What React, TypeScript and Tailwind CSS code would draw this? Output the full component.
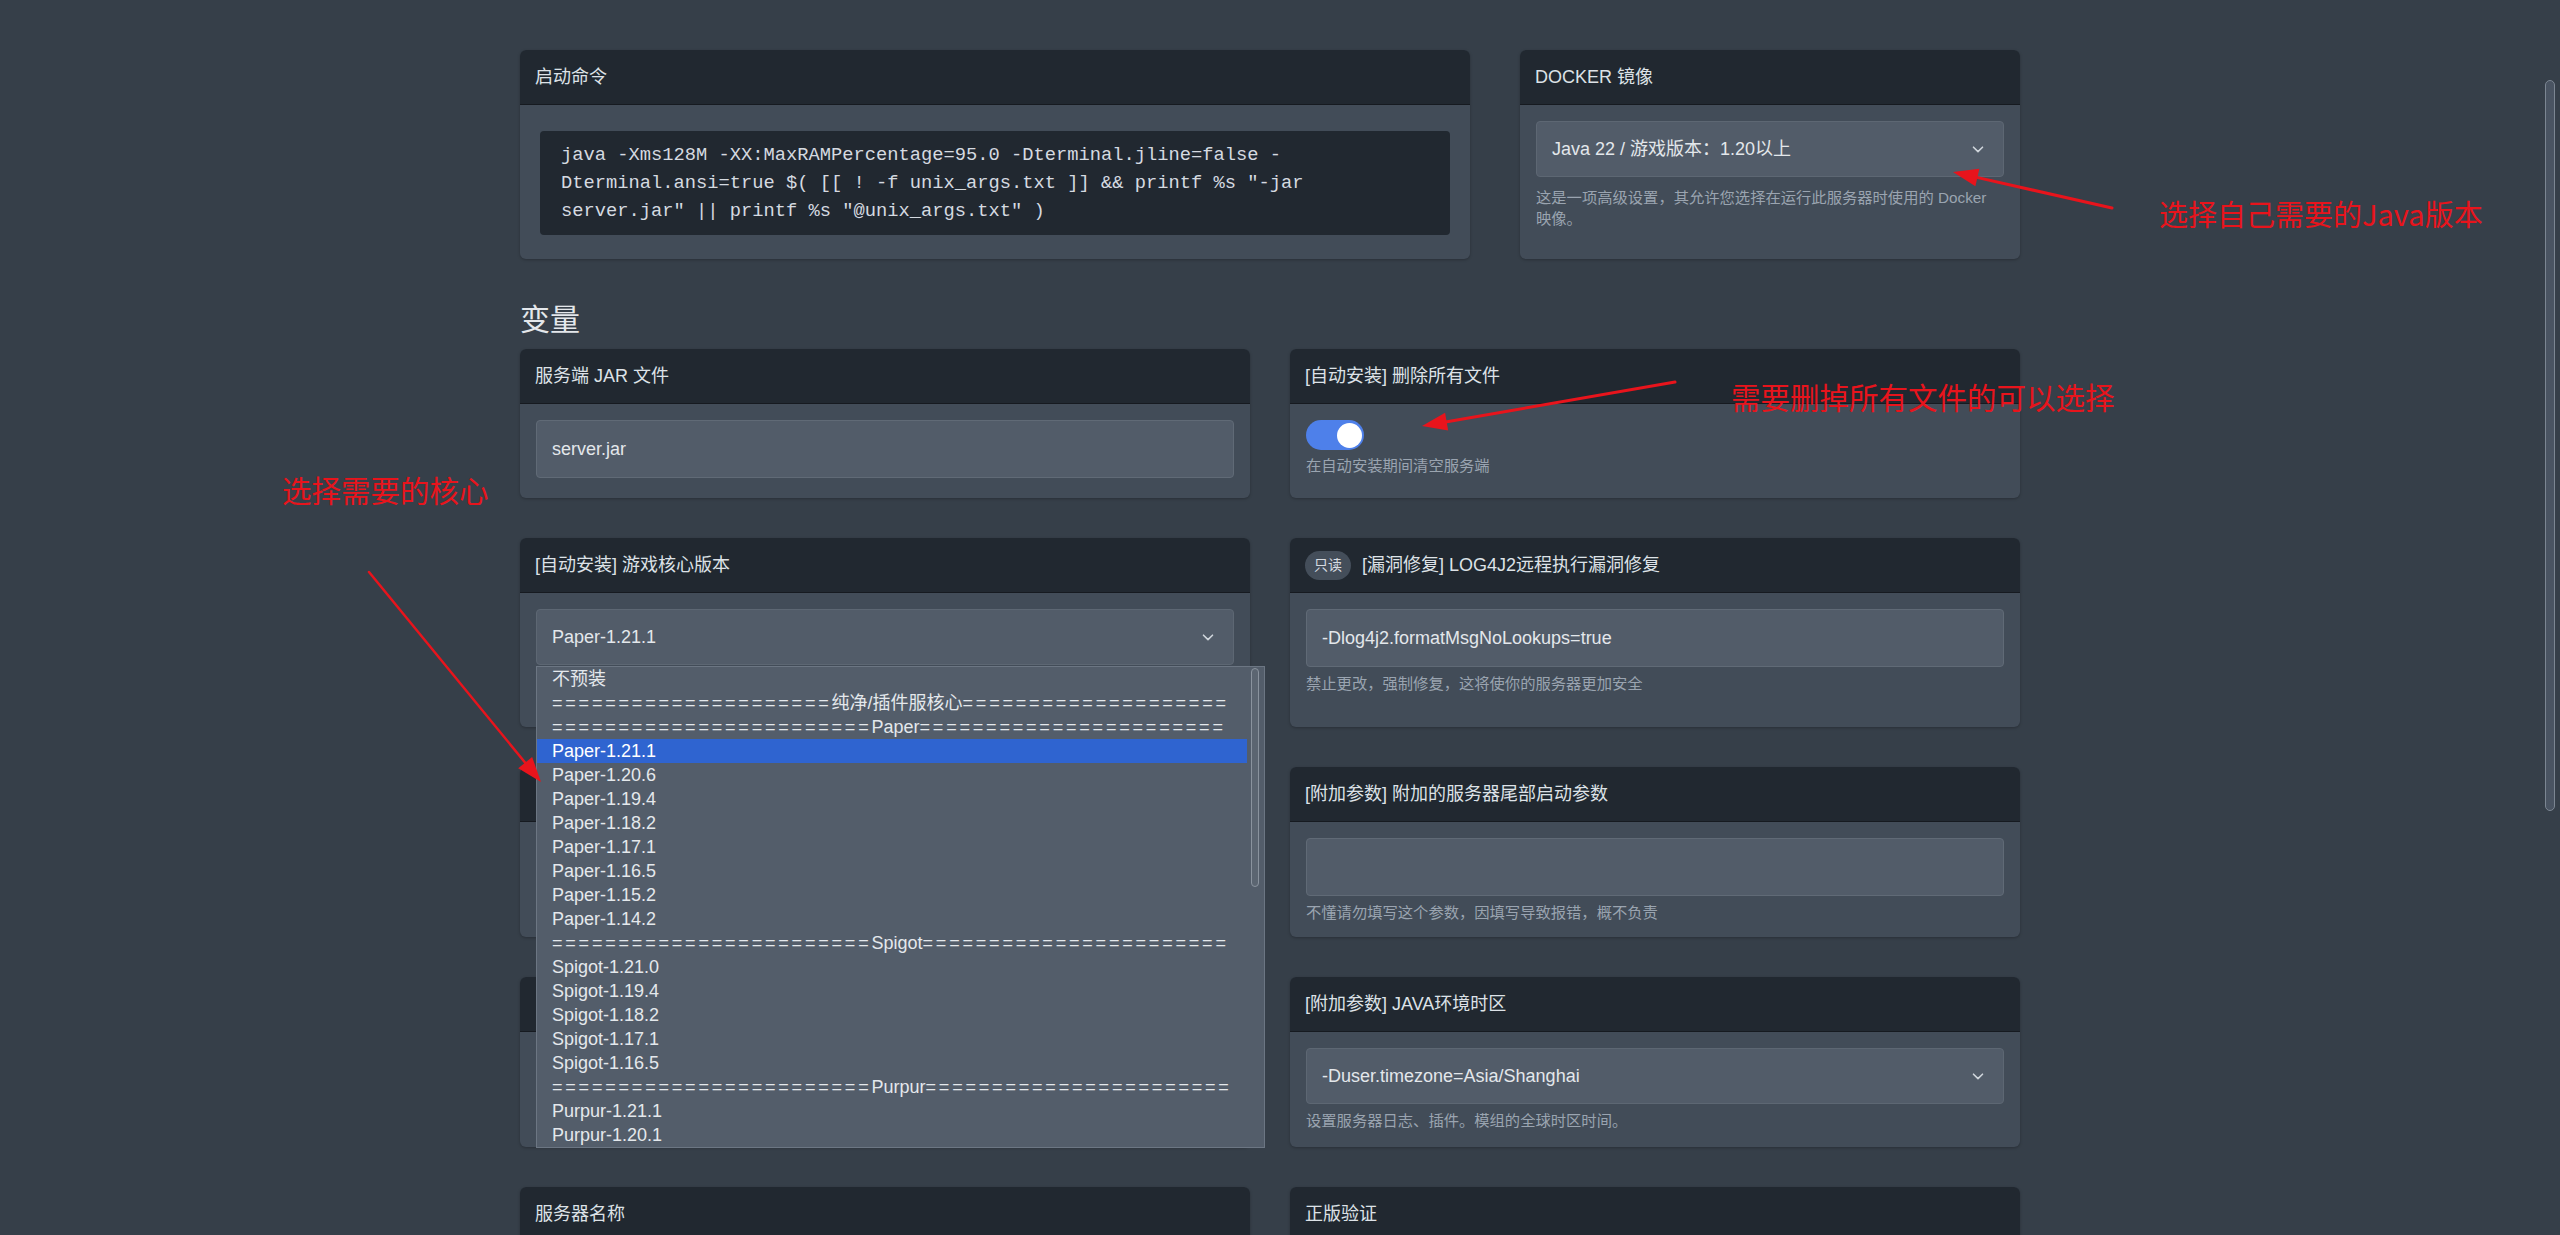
import React from 'react';

type CardProps = {
  title?: string;
  badge?: string;
  children?: React.ReactNode;
};

function Card({ title, badge, children }: CardProps) {
  return (
    <div className="flex flex-col rounded-[6px] bg-[#424c58] shadow-[0_1px_3px_rgba(0,0,0,0.25)]">
      <div className="flex h-[55px] shrink-0 items-center gap-[11px] rounded-t-[6px] border-b border-[#161a20] bg-[#212830] px-[15px] text-[18px] text-[#dde2e7]">
        {badge && (
          <span className="flex h-[29px] items-center rounded-full bg-[#444e5a] px-[9px] text-[14px] text-[#d6dbe0]">
            {badge}
          </span>
        )}
        {title && <span>{title}</span>}
      </div>
      <div className="flex-1 px-4 pb-[14px] pt-4">{children}</div>
    </div>
  );
}

function Input({ value }: { value: string }) {
  return (
    <div className="flex h-[58px] items-center rounded-[4px] border border-[#606a76] bg-[#525c69] pl-[15px] text-[18px] text-[#e3e7eb]">
      {value}
    </div>
  );
}

function Chevron() {
  return (
    <svg width="12" height="7" viewBox="0 0 12 7" fill="none" className="text-[#cfd5db]">
      <path d="M1.5 1.2L6 5.6L10.5 1.2" stroke="currentColor" strokeWidth="1.6" strokeLinecap="round" strokeLinejoin="round" />
    </svg>
  );
}

function Select({ value }: { value: string }) {
  return (
    <div className="flex h-[56px] items-center justify-between rounded-[4px] border border-[#5d6773] bg-[#525c69] pl-[15px] pr-[19px] text-[18px] text-[#e3e7eb]">
      <span>{value}</span>
      <Chevron />
    </div>
  );
}

function Help({ children, className = '' }: { children?: React.ReactNode; className?: string }) {
  return <p className={`mt-[6px] text-[15.3px] leading-[21px] text-[#9aa4b0] ${className}`}>{children}</p>;
}

type Option = { label: string; eq?: [number, number]; selected?: boolean };

const options: Option[] = [
  { label: '不预装' },
  { label: '纯净/插件服核心', eq: [21, 20] },
  { label: 'Paper', eq: [24, 23] },
  { label: 'Paper-1.21.1', selected: true },
  { label: 'Paper-1.20.6' },
  { label: 'Paper-1.19.4' },
  { label: 'Paper-1.18.2' },
  { label: 'Paper-1.17.1' },
  { label: 'Paper-1.16.5' },
  { label: 'Paper-1.15.2' },
  { label: 'Paper-1.14.2' },
  { label: 'Spigot', eq: [24, 23] },
  { label: 'Spigot-1.21.0' },
  { label: 'Spigot-1.19.4' },
  { label: 'Spigot-1.18.2' },
  { label: 'Spigot-1.17.1' },
  { label: 'Spigot-1.16.5' },
  { label: 'Purpur', eq: [24, 23] },
  { label: 'Purpur-1.21.1' },
  { label: 'Purpur-1.20.1' },
];

function CoreDropdown() {
  return (
    <div className="absolute left-0 top-full z-20 mt-px flex w-[729px] border border-[#6c7683] bg-[#535d6a]">
      <div className="flex-1">
        {options.map((o) => (
          <div
            key={o.label}
            className={`h-[24px] whitespace-nowrap pl-[15px] text-[18px] leading-[24px] ${
              o.selected ? 'bg-[#2f64d0] text-white' : 'text-[#e4e8ec]'
            }`}
          >
            {o.eq ? (
              <>
                <span className="tracking-[2.8px]">{'='.repeat(o.eq[0])}</span>
                {o.label}
                <span className="tracking-[2.8px]">{'='.repeat(o.eq[1])}</span>
              </>
            ) : (
              o.label
            )}
          </div>
        ))}
      </div>
      {/* list scrollbar */}
      <div className="w-[17px] shrink-0 pl-[4px] pt-px">
        <div className="h-[219px] w-[8px] rounded-full border border-[#8a939e] bg-[#5b6571]" />
      </div>
    </div>
  );
}

function arrowHead(x1: number, y1: number, x2: number, y2: number, len = 25, w = 9) {
  const dx = x2 - x1;
  const dy = y2 - y1;
  const l = Math.hypot(dx, dy);
  const ux = dx / l;
  const uy = dy / l;
  const bx = x2 - ux * len;
  const by = y2 - uy * len;
  return {
    base: [bx + ux * 4, by + uy * 4],
    points: `${x2},${y2} ${bx - uy * w},${by + ux * w} ${bx + uy * w},${by - ux * w}`,
  };
}

function Arrow({ x1, y1, x2, y2, width = 3 }: { x1: number; y1: number; x2: number; y2: number; width?: number }) {
  const h = arrowHead(x1, y1, x2, y2);
  return (
    <g>
      <line x1={x1} y1={y1} x2={h.base[0]} y2={h.base[1]} stroke="#e8141c" strokeWidth={width} strokeLinecap="round" />
      <polygon points={h.points} fill="#e8141c" />
    </g>
  );
}

export default function App() {
  return (
    <div className="relative h-[1235px] w-[2560px] overflow-hidden bg-[#363f49] font-['Liberation_Sans','Noto_Sans_CJK_SC',sans-serif]">
      <div className="ml-[520px] w-[1500px] pt-[50px]">
        {/* startup + docker */}
        <div className="flex gap-[50px]">
          <div className="w-[950px]">
            <Card title="启动命令">
              <div className="px-[4px] py-[10px]">
                <pre className="whitespace-pre-wrap break-words rounded-[4px] bg-[#212830] px-[21px] py-[10px] font-['Liberation_Mono',monospace] text-[18.75px] leading-[28px] text-[#d5dae0]">
                  java -Xms128M -XX:MaxRAMPercentage=95.0 -Dterminal.jline=false -Dterminal.ansi=true $( [[ ! -f unix_args.txt ]] &amp;&amp; printf %s "-jar server.jar" || printf %s "@unix_args.txt" )
                </pre>
              </div>
            </Card>
          </div>
          <div className="flex w-[500px]">
            <div className="flex-1 [&>div]:h-full">
              <Card title="DOCKER 镜像">
                <Select value="Java 22 / 游戏版本：1.20以上" />
                <Help className="!mt-[10px]">这是一项高级设置，其允许您选择在运行此服务器时使用的 Docker 映像。</Help>
              </Card>
            </div>
          </div>
        </div>

        <h2 className="mb-[11px] mt-[43px] h-[36px] text-[30px] leading-[36px] text-[#e4e7eb]">变量</h2>

        <div className="grid grid-cols-2 gap-x-[40px] gap-y-[40px]">
          <Card title="服务端 JAR 文件">
            <Input value="server.jar" />
            <Help />
          </Card>
          <Card title="[自动安装] 删除所有文件">
            <div className="flex h-[30px] w-[58px] items-center justify-end rounded-full bg-[#4e80ea] px-[2px]">
              <div className="h-[25px] w-[25px] rounded-full bg-white" />
            </div>
            <Help className="!mt-[5px]">在自动安装期间清空服务端</Help>
          </Card>

          <Card title="[自动安装] 游戏核心版本">
            <div className="relative">
              <Select value="Paper-1.21.1" />
              <CoreDropdown />
            </div>
            {/* two-line help, covered by the open list */}
            <div className="mt-[6px] h-[42px]" />
          </Card>
          <Card title="[漏洞修复] LOG4J2远程执行漏洞修复" badge="只读">
            <Input value="-Dlog4j2.formatMsgNoLookups=true" />
            <Help>禁止更改，强制修复，这将使你的服务器更加安全</Help>
          </Card>

          {/* covered by the open list */}
          <Card>
            <Input value="" />
            <div className="mt-[6px] h-[21px]" />
          </Card>
          <Card title="[附加参数] 附加的服务器尾部启动参数">
            <Input value="" />
            <Help>不懂请勿填写这个参数，因填写导致报错，概不负责</Help>
          </Card>

          <Card>
            <Input value="" />
            <div className="mt-[6px] h-[21px]" />
          </Card>
          <Card title="[附加参数] JAVA环境时区">
            <Select value="-Duser.timezone=Asia/Shanghai" />
            <Help>设置服务器日志、插件。模组的全球时区时间。</Help>
          </Card>

          <Card title="服务器名称">
            <Input value="" />
            <Help />
          </Card>
          <Card title="正版验证">
            <Input value="" />
            <Help />
          </Card>
        </div>
      </div>

      {/* page scrollbar */}
      <div className="absolute left-[2545px] top-[80px] h-[731px] w-[10px] rounded-full border border-[#7c8692] bg-[#4a5462]" />

      {/* annotations */}
      <svg className="pointer-events-none absolute left-0 top-0 z-30" width="2560" height="1235">
        <Arrow x1={2112} y1={208} x2={1953} y2={172} />
        <Arrow x1={1675} y1={382} x2={1422} y2={426} />
        <Arrow x1={369} y1={572} x2={541} y2={782} width={2.5} />
      </svg>
      <div className="pointer-events-none absolute left-[2159px] top-[193px] z-30 whitespace-nowrap font-['Noto_Sans_CJK_SC',sans-serif] text-[29px] leading-[40px] text-[#e8141c]">
        选择自己需要的Java版本
      </div>
      <div className="pointer-events-none absolute left-[1731px] top-[376px] z-30 whitespace-nowrap font-['Noto_Sans_CJK_SC',sans-serif] text-[29.5px] leading-[40px] text-[#e8141c]">
        需要删掉所有文件的可以选择
      </div>
      <div className="pointer-events-none absolute left-[282px] top-[469px] z-30 whitespace-nowrap font-['Noto_Sans_CJK_SC',sans-serif] text-[29.5px] leading-[40px] text-[#e8141c]">
        选择需要的核心
      </div>
    </div>
  );
}
